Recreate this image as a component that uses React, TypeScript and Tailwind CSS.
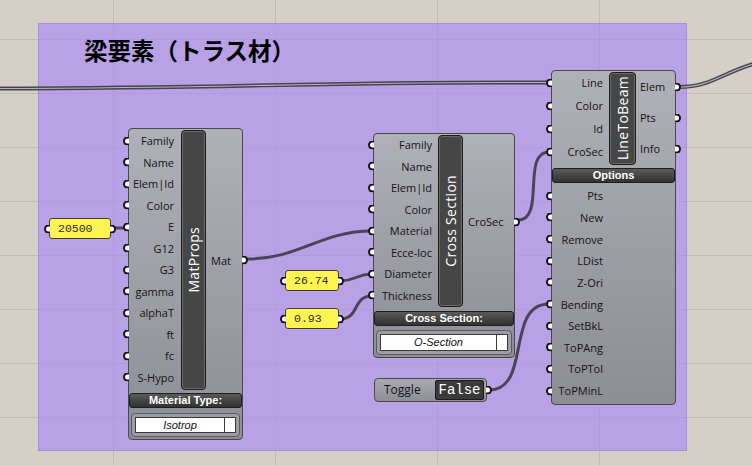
import React from 'react';

const ui = "font-['Open_Sans','Noto_Sans',sans-serif]";

function Grip({ side }: { side: 'in' | 'out' }) {
  return side === 'in' ? (
    <span className="absolute -left-[6px] top-1/2 -translate-y-1/2 w-[6px] h-[9px] rounded-l-full bg-white border-2 border-r-0 border-[#161616]" />
  ) : (
    <span className="absolute -right-[6px] top-1/2 -translate-y-1/2 w-[6px] h-[9px] rounded-r-full bg-white border-2 border-l-0 border-[#161616]" />
  );
}

function InRow({ label, h, pr }: { label: string; h: string; pr: string }) {
  return (
    <div className={`relative flex items-center justify-end ${h} ${pr}`}>
      <Grip side="in" />
      <span className="leading-none whitespace-nowrap">{label}</span>
    </div>
  );
}

function OutRow({ label, h, pl }: { label: string; h: string; pl: string }) {
  return (
    <div className={`relative flex items-center ${h} ${pl}`}>
      <span className="leading-none">{label}</span>
      <Grip side="out" />
    </div>
  );
}

function Bar({ title, size }: { title: string; size: string }) {
  return (
    <div className={`${size} flex items-center justify-center rounded-[4px] border border-[#1c1c1c] bg-[#464646] shadow-[inset_0_0_0_1px_#6a6a6a]`}>
      <span className="[writing-mode:vertical-rl] rotate-180 text-white text-[14px] tracking-[0.3px] leading-none whitespace-nowrap">
        {title}
      </span>
    </div>
  );
}

function Header({ label, cls }: { label: string; cls: string }) {
  return (
    <div className={`${cls} flex items-center justify-center rounded-[3px] border border-[#1e1e1e] bg-linear-to-b from-[#5a5a5a] to-[#323232] text-white font-bold text-[11px] leading-none font-['Liberation_Sans',sans-serif]`}>
      {label}
    </div>
  );
}

function Dropdown({ value, cls }: { value: string; cls: string }) {
  return (
    <div className={`${cls} flex rounded-[4px] border border-[#5c5c5c] bg-[#9c9ca4] p-[3px]`}>
      <div className="flex-1 flex border border-[#3a3a3a] bg-white">
        <div className="flex-1 flex items-center justify-center italic text-[11px] leading-none font-['Liberation_Sans',sans-serif] text-[#111]">
          {value}
        </div>
        <div className="w-[11px] border-l border-[#3a3a3a] bg-white" />
      </div>
    </div>
  );
}

function Panel({ value, pos }: { value: string; pos: string }) {
  return (
    <div className={`absolute ${pos} h-[21px] flex items-center rounded-[3px] border border-[#3c3c3c] bg-[#fff450] pl-[8px] font-['Liberation_Mono',monospace] text-[11.5px] text-[#2a2a2a] leading-none`}>
      <Grip side="in" />
      {value}
      <Grip side="out" />
    </div>
  );
}

const bodyCls = `absolute rounded-[4px] border border-[#494949] bg-linear-to-b from-[#b0b0b8] to-[#8d8d95] text-[11px] text-[#141414] ${ui}`;

export default function App() {
  const matIn = ['Family', 'Name', 'Elem|Id', 'Color', 'E', 'G12', 'G3', 'gamma', 'alphaT', 'ft', 'fc', 'S-Hypo'];
  const csIn = ['Family', 'Name', 'Elem|Id', 'Color', 'Material', 'Ecce-loc', 'Diameter', 'Thickness'];
  const lbIn = ['Line', 'Color', 'Id', 'CroSec'];
  const lbOut = ['Elem', 'Pts', 'Info'];
  const lbOpt = ['Pts', 'New', 'Remove', 'LDist', 'Z-Ori', 'Bending', 'SetBkL', 'ToPAng', 'ToPTol', 'ToPMinL'];

  return (
    <div className="relative w-[752px] h-[465px] overflow-hidden bg-[#d4d0c8] bg-[linear-gradient(to_right,#c1bdb5_1px,transparent_1px),linear-gradient(to_bottom,#c1bdb5_1px,transparent_1px)] bg-[size:162px_54px] bg-[position:113px_39px]">
      {/* group */}
      <div className="absolute left-[38px] top-[23px] w-[649px] h-[428px] bg-[rgba(167,130,250,0.6)] border border-[rgba(150,120,220,0.5)]" />
      <div className="absolute left-[84px] top-[39px] text-[23.5px] leading-none font-bold text-black font-['Noto_Sans_CJK_JP',sans-serif] whitespace-nowrap">
        梁要素（トラス材）
      </div>

      {/* wires */}
      <svg className="absolute inset-0 w-full h-full" viewBox="0 0 752 465" fill="none">
        <g strokeLinecap="round">
          <path d="M -5 88.5 C 250 88, 300 82, 547 82.5" stroke="#48454f" strokeWidth="4" />
          <path d="M -5 88.5 C 250 88, 300 82, 547 82.5" stroke="#b4b0bc" strokeWidth="1.2" />
          <path d="M 679 87 C 712 87, 722 72, 760 62" stroke="#48454f" strokeWidth="4" />
          <path d="M 679 87 C 712 87, 722 72, 760 62" stroke="#b4b0bc" strokeWidth="1.2" />
        </g>
        <g stroke="#4a4458" strokeWidth="3">
          <path d="M 247 259 C 300 259, 320 231, 372 231" />
          <path d="M 518 220 C 546 220, 521 152, 549 152" />
          <path d="M 489 390 C 532 390, 505 304, 549 304" />
          <path d="M 340 281 C 356 281, 356 274, 372 274" />
          <path d="M 340 319 C 360 319, 352 296, 372 296" />
          <path d="M 113 228 L 126 228" />
        </g>
      </svg>

      {/* MatProps */}
      <div className={`${bodyCls} left-[128px] top-[128px] w-[115px] h-[312px]`}>
        <div className="flex pt-px">
          <div className="w-[49px] flex flex-col">
            {matIn.map((l) => (
              <InRow key={l} label={l} h="h-[21.5px]" pr="pr-[4px]" />
            ))}
          </div>
          <div className="ml-[3px]">
            <Bar title="MatProps" size="w-[25px] h-[260px]" />
          </div>
          <div className="flex-1 flex flex-col justify-center">
            <OutRow label="Mat" h="h-[21px]" pl="pl-[5px]" />
          </div>
        </div>
        <Header label="Material Type:" cls="mt-[3px] h-[15px]" />
        <Dropdown value="Isotrop" cls="mx-[2px] mt-[5px] h-[24px]" />
      </div>

      <Panel value="20500" pos="left-[49px] top-[218px] w-[62px]" />

      {/* Cross Section */}
      <div className={`${bodyCls} left-[373px] top-[133px] w-[142px] h-[225px]`}>
        <div className="flex">
          <div className="w-[62px] flex flex-col">
            {csIn.map((l) => (
              <InRow key={l} label={l} h="h-[21.5px]" pr="pr-[4px]" />
            ))}
          </div>
          <div className="ml-[2px] mt-px">
            <Bar title="Cross Section" size="w-[25px] h-[172px]" />
          </div>
          <div className="flex-1 flex flex-col justify-center pt-[2px]">
            <OutRow label="CroSec" h="h-[21px]" pl="pl-[5px]" />
          </div>
        </div>
        <Header label="Cross Section:" cls="mt-[4px] h-[15px]" />
        <Dropdown value="O-Section" cls="mx-[2px] mt-[4px] h-[25px]" />
      </div>

      <Panel value="26.74" pos="left-[285px] top-[270px] w-[54px]" />
      <Panel value="0.93" pos="left-[285px] top-[308px] w-[54px]" />

      {/* Toggle */}
      <div className={`absolute left-[374px] top-[378px] w-[113px] h-[24px] flex items-center rounded-[4px] border border-[#494949] bg-linear-to-b from-[#aaaab2] to-[#8e8e96] ${ui}`}>
        <span className="pl-[9px] w-[60px] text-[12px] leading-none text-[#141414]">Toggle</span>
        <div className="flex-1 mr-[2px] h-[20px] flex items-center justify-center rounded-[2px] border border-[#1c1c1c] bg-[#3a3a3a] font-['Liberation_Mono',monospace] text-[14px] text-white leading-none">
          False
        </div>
        <Grip side="out" />
      </div>

      {/* LineToBeam */}
      <div className={`${bodyCls} left-[551px] top-[70px] w-[125px] h-[335px]`}>
        <div className="flex">
          <div className="w-[54px] flex flex-col">
            {lbIn.map((l) => (
              <InRow key={l} label={l} h="h-[23px]" pr="pr-[3px]" />
            ))}
          </div>
          <div className="ml-[3px] mt-px">
            <Bar title="LineToBeam" size="w-[27px] h-[93px]" />
          </div>
          <div className="flex-1 flex flex-col">
            {lbOut.map((l) => (
              <OutRow key={l} label={l} h="h-[31px]" pl="pl-[4px]" />
            ))}
          </div>
        </div>
        <Header label="Options" cls="mt-[3px] h-[15px]" />
        <div className="mt-[2px] w-[54px] flex flex-col">
          {lbOpt.map((l) => (
            <InRow key={l} label={l} h="h-[21.65px]" pr="pr-[3px]" />
          ))}
        </div>
      </div>
    </div>
  );
}
